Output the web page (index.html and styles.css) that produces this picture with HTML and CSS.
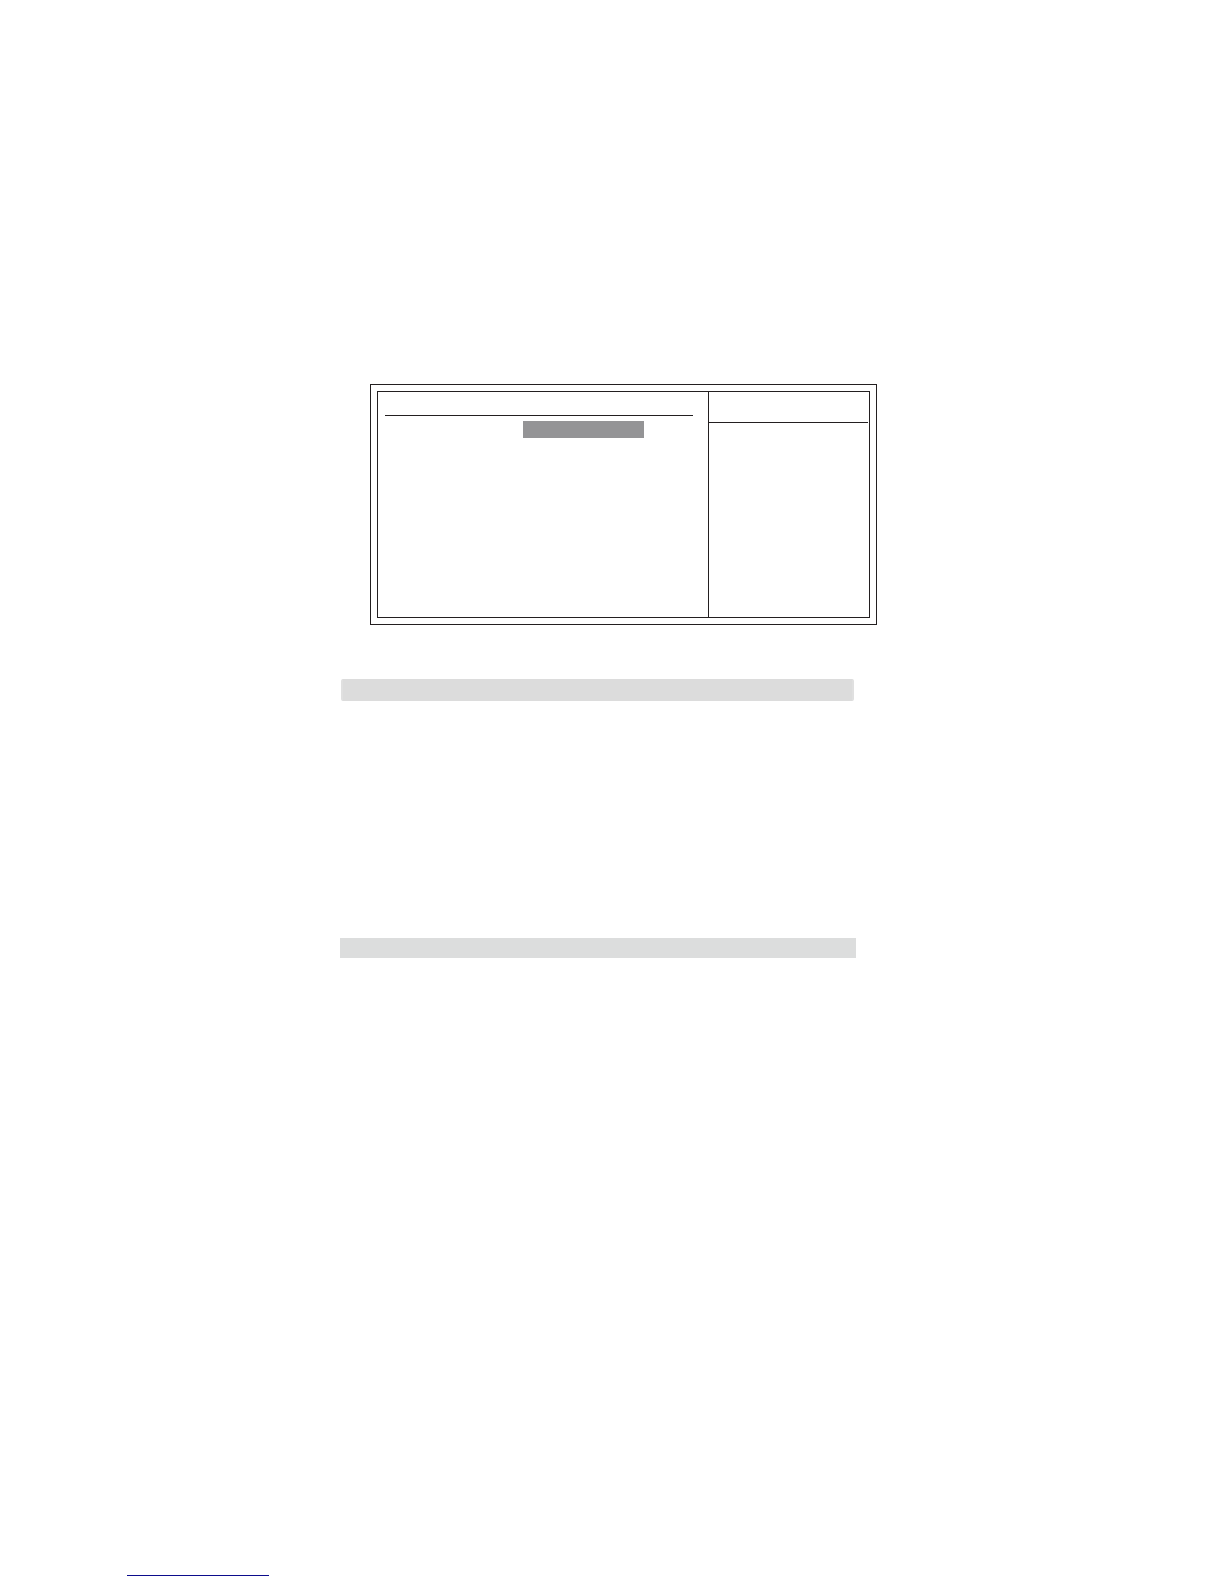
FILE: index.html
```html
<!DOCTYPE html>
<html lang="en">
<head>
    <meta charset="UTF-8">
    <meta name="viewport" content="width=device-width, initial-scale=1.0">
    <title>Setup</title>
    <link rel="stylesheet" href="styles.css">
</head>
<body>
    <main class="content">
        <div class="frame">
            <div class="screen">
                <div class="settings">
                    <div class="line"></div>
                    <div class="selected"></div>
                </div>
                <div class="help">
                    <div class="line"></div>
                </div>
            </div>
        </div>

        <div class="bar bar-edged"></div>
        <div class="bar bar-plain"></div>
    </main>

    <footer class="footer">
        <div class="underline"></div>
    </footer>
</body>
</html>
```

FILE: styles.css
```css
body {
    margin: 0;
    min-height: 100vh;
    display: flex;
    flex-direction: column;
    background-color: #fff;
    font-family: "Liberation Sans", Arial, sans-serif;
}
.content {
    width: 100%;
    max-width: 537px;
    margin-left: 340px;
    padding-top: 384px;
}

/* double outlined screen */
.frame {
    margin-left: 30px;
    padding: 6px;
    border: 1px solid #231f20;
}
.screen {
    display: flex;
    min-height: 225px;
    border: 1px solid #231f20;
}
.settings {
    flex: 2;
    padding: 23px 15px 0 7px;
}
.help {
    flex: 0 0 161px;
    box-sizing: border-box;
    padding: 30px 1px 0 0;
    border-left: 1px solid #231f20;
}
.line {
    height: 1px;
    background-color: #231f20;
}
.selected {
    width: 121px;
    height: 17px;
    margin: 5px 49px 0 auto;
    background-color: #949496;
}

/* grey section bars */
.bar {
    background-color: #dcdddd;
}
.bar-edged {
    height: 22px;
    margin: 54px 23px 0 1px;
    box-sizing: border-box;
    background-color: #dcdcdc;
    border: solid #e0e0e0;
    border-width: 0 2px;
    border-radius: 2px;
}
.bar-plain {
    height: 20px;
    margin: 237px 21px 0 0;
}

.footer {
    margin-top: auto;
    padding: 0 0 8px 127px;
}
.underline {
    max-width: 142px;
    height: 1px;
    background-color: #0c0c8c;
}
```
